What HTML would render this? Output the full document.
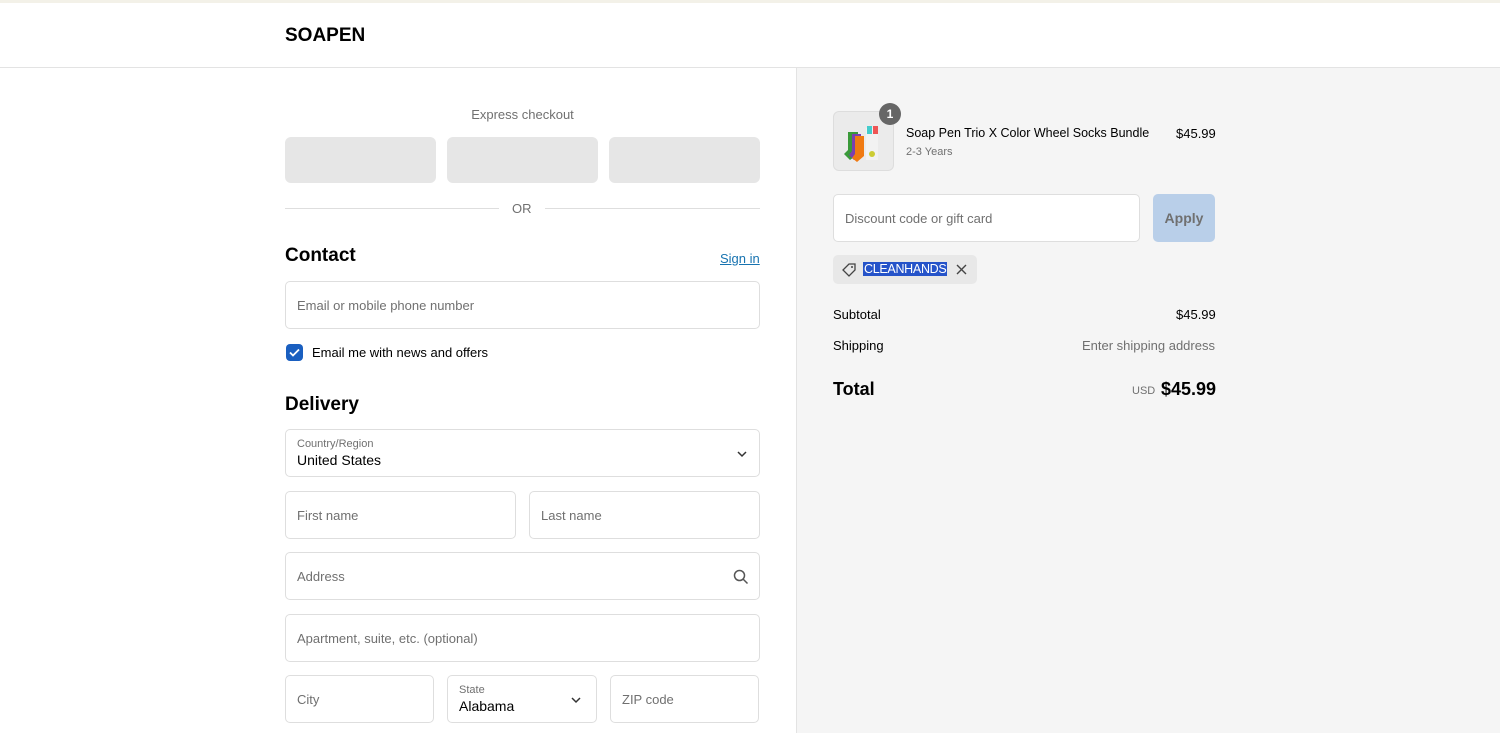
<!DOCTYPE html>
<html><head><style>
*{box-sizing:border-box;margin:0;padding:0}
body{width:1500px;height:733px;overflow:hidden;background:#fff;font-family:"Liberation Sans",sans-serif;color:#000;position:relative;font-size:13px}
.a{position:absolute}
.inp{position:absolute;border:1px solid #dedede;border-radius:5px;background:#fff;color:#707070;font-size:13px;padding-left:11px;display:flex;align-items:center}
.lbl{font-size:11px;color:#707070}
</style></head><body>
<div class="a" style="left:0;top:0;width:1500px;height:3px;background:#f3f1e8"></div>
<div class="a" style="left:285px;top:25px;font-size:19px;font-weight:bold;">SOAPEN</div>
<div class="a" style="left:0;top:67px;width:1500px;height:1px;background:#e3e3e3"></div>
<div class="a" style="left:796px;top:68px;width:704px;height:665px;background:#f5f5f5;border-left:1px solid #e3e3e3"></div>

<div class="a" style="left:285px;top:107px;width:475px;text-align:center;color:#707070;font-size:13px">Express checkout</div>
<div class="a" style="left:285px;top:137px;width:151px;height:46px;background:#e6e6e6;border-radius:6px"></div>
<div class="a" style="left:447px;top:137px;width:151px;height:46px;background:#e6e6e6;border-radius:6px"></div>
<div class="a" style="left:609px;top:137px;width:151px;height:46px;background:#e6e6e6;border-radius:6px"></div>
<div class="a" style="left:285px;top:208px;width:214px;height:1px;background:#dedede"></div>
<div class="a" style="left:545px;top:208px;width:215px;height:1px;background:#dedede"></div>
<div class="a" style="left:512px;top:201px;color:#707070;font-size:13px">OR</div>

<div class="a" style="left:285px;top:245px;font-size:19px;font-weight:bold">Contact</div>
<div class="a" style="left:720px;top:251px;font-size:13px;color:#1773b0;text-decoration:underline">Sign in</div>
<div class="inp" style="left:285px;top:281px;width:475px;height:48px">Email or mobile phone number</div>
<div class="a" style="left:286px;top:344px;width:17px;height:17px;background:#1a5fc0;border-radius:4px"><svg width="17" height="17"><path d="M4 8.5l3 3 6-6" stroke="#fff" stroke-width="1.8" fill="none"/></svg></div>
<div class="a" style="left:312px;top:345px;font-size:13px;color:#000">Email me with news and offers</div>

<div class="a" style="left:285px;top:394px;font-size:19px;font-weight:bold">Delivery</div>
<div class="inp" style="left:285px;top:429px;width:475px;height:48px;display:block;padding-top:8px"><div class="lbl">Country/Region</div><div style="color:#000;font-size:14px;margin-top:2px">United States</div>
<svg class="a" style="left:450px;top:18px" width="12" height="12"><path d="M2 4l4 4 4-4" stroke="#333" stroke-width="1.5" fill="none"/></svg></div>
<div class="inp" style="left:285px;top:491px;width:231px;height:48px">First name</div>
<div class="inp" style="left:529px;top:491px;width:231px;height:48px">Last name</div>
<div class="inp" style="left:285px;top:552px;width:475px;height:48px">Address
<svg class="a" style="left:447px;top:16px" width="16" height="16"><circle cx="6.5" cy="6.5" r="5" stroke="#555" stroke-width="1.5" fill="none"/><path d="M10 10l4.5 4.5" stroke="#555" stroke-width="1.5"/></svg></div>
<div class="inp" style="left:285px;top:614px;width:475px;height:48px">Apartment, suite, etc. (optional)</div>
<div class="inp" style="left:285px;top:675px;width:149px;height:48px">City</div>
<div class="inp" style="left:447px;top:675px;width:150px;height:48px;display:block;padding-top:8px"><div class="lbl">State</div><div style="color:#000;font-size:14px;margin-top:2px">Alabama</div>
<svg class="a" style="left:122px;top:18px" width="12" height="12"><path d="M2 4l4 4 4-4" stroke="#333" stroke-width="1.5" fill="none"/></svg></div>
<div class="inp" style="left:610px;top:675px;width:149px;height:48px">ZIP code</div>

<div class="a" style="left:833px;top:111px;width:61px;height:60px;background:#ebebeb;border:1px solid #ddd;border-radius:6px">
<svg width="60" height="60"><path d="M14 20h10v22l-8 6-6-6 4-4z" fill="#3a9a3a"/><path d="M18 22h9v20l-7 6-5-5 3-4z" fill="#7b3fb0"/><path d="M21 24h9v20l-7 6-5-4 3-4z" fill="#f07a12"/><rect x="32" y="16" width="12" height="32" fill="#f2f2f2"/><rect x="33" y="14" width="5" height="8" fill="#4cc"/><rect x="39" y="14" width="5" height="8" fill="#e55"/><circle cx="38" cy="42" r="3" fill="#cc3"/></svg></div>
<div class="a" style="left:879px;top:103px;width:22px;height:22px;border-radius:11px;background:#666;color:#fff;font-size:12px;font-weight:bold;text-align:center;line-height:22px">1</div>
<div class="a" style="left:906px;top:126px;font-size:12.5px">Soap Pen Trio X Color Wheel Socks Bundle</div>
<div class="a" style="left:906px;top:146px;font-size:11px;color:#707070">2-3 Years</div>
<div class="a" style="left:1176px;top:126px;font-size:13px">$45.99</div>
<div class="inp" style="left:833px;top:194px;width:307px;height:48px">Discount code or gift card</div>
<div class="a" style="left:1153px;top:194px;width:62px;height:48px;background:#b9cfe9;border-radius:5px;color:#707070;font-size:14px;font-weight:bold;text-align:center;line-height:48px">Apply</div>
<div class="a" style="left:833px;top:255px;width:144px;height:29px;background:#e8e8e8;border-radius:5px">
<svg class="a" style="left:8px;top:7px" width="16" height="16"><path d="M2 8l6-6h6v6l-6 6z" stroke="#444" stroke-width="1.3" fill="none"/><circle cx="11" cy="5" r="1" fill="#444"/></svg>
<div class="a" style="left:30px;top:7px;background:#2553c9;color:#fff;font-size:12.5px;letter-spacing:-0.3px;padding:0 1px">CLEANHANDS</div>
<svg class="a" style="left:123px;top:9px" width="11" height="11"><path d="M1 1l9 9M10 1l-9 9" stroke="#444" stroke-width="1.4"/></svg></div>
<div class="a" style="left:833px;top:307px">Subtotal</div>
<div class="a" style="left:1176px;top:307px">$45.99</div>
<div class="a" style="left:833px;top:338px">Shipping</div>
<div class="a" style="left:1082px;top:338px;color:#707070">Enter shipping address</div>
<div class="a" style="left:833px;top:379px;font-size:18px;font-weight:bold">Total</div>
<div class="a" style="left:1132px;top:385px;font-size:11px;color:#707070">USD</div>
<div class="a" style="left:1161px;top:379px;font-size:18px;font-weight:bold">$45.99</div>
</body></html>
